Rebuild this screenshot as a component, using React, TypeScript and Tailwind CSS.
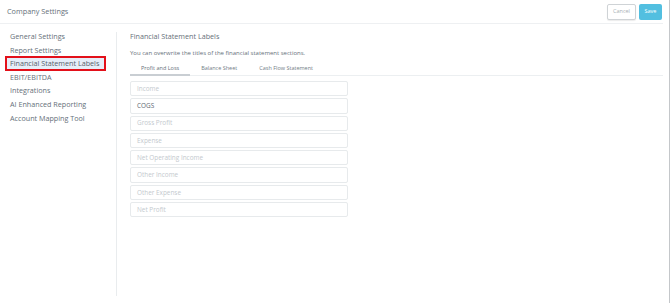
import React from 'react';

const menu = [
    'General Settings',
    'Report Settings',
    'Financial Statement Labels',
    'EBIT/EBITDA',
    'Integrations',
    'AI Enhanced Reporting',
    'Account Mapping Tool',
];

const fields = [
    { label: 'Income', value: '' },
    { label: 'COGS', value: 'COGS' },
    { label: 'Gross Profit', value: '' },
    { label: 'Expense', value: '' },
    { label: 'Net Operating Income', value: '' },
    { label: 'Other Income', value: '' },
    { label: 'Other Expense', value: '' },
    { label: 'Net Profit', value: '' },
];

const tabs = ['Profit and Loss', 'Balance Sheet', 'Cash Flow Statement'];

const App = () => {
    return (
        <div
            className="flex h-[303px] w-[670px] overflow-hidden bg-white text-[#66707a]"
            style={{ fontFamily: '"Open Sans", "Liberation Sans", sans-serif' }}
        >
            <div className="w-[663px]">
                {/* Header */}
                <div className="flex h-[24px] items-center justify-between border-b border-[#eef0f2] pl-[7px] pr-[1px]">
                    <span className="text-[7.3px] leading-none">Company Settings</span>
                    <div className="flex gap-[3px]">
                        <button className="h-[16px] w-[29px] rounded-[2px] border border-[#cfd3d6] bg-white text-[5.5px] text-[#a9b0b6] shadow-[0_1px_1px_rgba(0,0,0,0.08)]">
                            Cancel
                        </button>
                        <button className="h-[16px] w-[23px] rounded-[2px] bg-[#52bfe0] text-[5.5px] text-white">
                            Save
                        </button>
                    </div>
                </div>

                {/* Body */}
                <div className="flex h-[272px] pt-[8px]">
                    {/* Sidebar */}
                    <div className="w-[117px] border-r border-[#e9ecee]">
                        <div className="-mt-[2px] flex flex-col">
                            {menu.map((item, i) =>
                                i === 2 ? (
                                    <div key={item} className="relative h-[13.6px]">
                                        <div className="absolute left-[5px] top-[-1px] h-[15px] w-[101px] border-2 border-[#e3101a] bg-[#e6eef9]" />
                                        <span className="relative block pl-[10px] text-[7.2px] leading-[13.6px] text-[#56616c]">{item}</span>
                                    </div>
                                ) : (
                                    <div key={item} className="h-[13.6px] pl-[10px] text-[7.2px] leading-[13.6px]">
                                        {item}
                                    </div>
                                )
                            )}
                        </div>
                    </div>

                    {/* Content */}
                    <div className="flex-1 pl-[13px]">
                        <div className="-mt-[1px] h-[10px] text-[7.2px] leading-[10px]">Financial Statement Labels</div>
                        <div className="mt-[8px] h-[8px] text-[6px] leading-[8px]">
                            You can overwrite the titles of the financial statement sections.
                        </div>
                        <div className="mt-[6px] flex h-[13px] border-b border-[#eceff1]">
                            {tabs.map((t, i) => (
                                <div
                                    key={t}
                                    className={
                                        i === 0
                                            ? '-mb-[1px] border-b-2 border-[#c9ced3] px-[11px] text-[5.5px] leading-[11px] text-[#66707a]'
                                            : 'px-[11px] text-[5.5px] leading-[11px] text-[#737d86]'
                                    }
                                >
                                    {t}
                                </div>
                            ))}
                        </div>
                        <div className="mt-[5px] flex flex-col gap-[2px]">
                            {fields.map((f) => (
                                <div
                                    key={f.label}
                                    className="flex h-[15.3px] w-[218px] items-center rounded-[2px] border border-[#e7eaec] pl-[6px] text-[6.4px]"
                                >
                                    {f.value ? (
                                        <span className="text-[#5b6570]">{f.value}</span>
                                    ) : (
                                        <span className="text-[#c3c9ce]">{f.label}</span>
                                    )}
                                </div>
                            ))}
                        </div>
                    </div>
                </div>
            </div>
            <div className="flex-1" />
            <div className="w-[1px] bg-[#c4c7ca]" />
        </div>
    );
};

export default App;
